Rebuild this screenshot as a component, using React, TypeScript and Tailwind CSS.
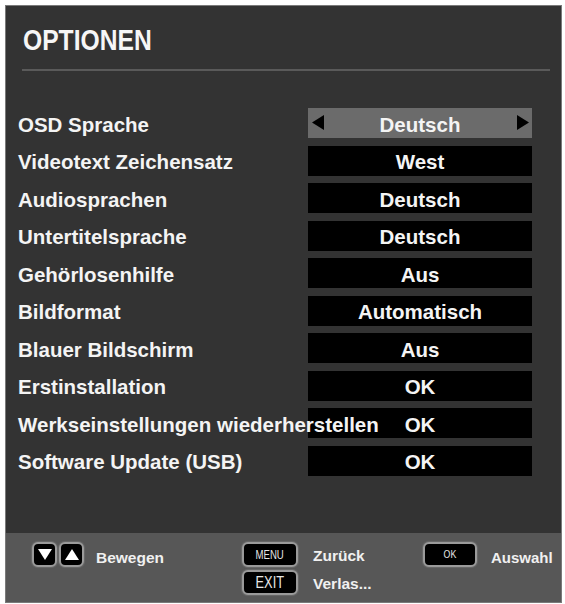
import React from "react";

type Row = { label: string; value: string };

const rows: Row[] = [
  { label: "OSD Sprache", value: "Deutsch" },
  { label: "Videotext Zeichensatz", value: "West" },
  { label: "Audiosprachen", value: "Deutsch" },
  { label: "Untertitelsprache", value: "Deutsch" },
  { label: "Gehörlosenhilfe", value: "Aus" },
  { label: "Bildformat", value: "Automatisch" },
  { label: "Blauer Bildschirm", value: "Aus" },
  { label: "Erstinstallation", value: "OK" },
  { label: "Werkseinstellungen wiederherstellen", value: "OK" },
  { label: "Software Update (USB)", value: "OK" },
];

function Triangle({ dir, className }: { dir: "left" | "right" | "up" | "down"; className?: string }) {
  const points = {
    left: "10,0 10,13 0,6.5",
    right: "0,0 0,13 10,6.5",
    up: "6.5,0 13,11 0,11",
    down: "0,0 13,0 6.5,11",
  }[dir];
  const box = dir === "left" || dir === "right" ? "0 0 10 13" : "0 0 13 11";
  return (
    <svg viewBox={box} preserveAspectRatio="none" className={className}>
      <polygon points={points} fill="currentColor" />
    </svg>
  );
}

function OptionRow({ row, selected }: { row: Row; selected: boolean }) {
  return (
    <div className="flex h-[30px] items-center">
      <span className="relative z-10 w-[290px] whitespace-nowrap pt-[4px] text-[20.5px] font-bold leading-none text-[#f4f4f4]">
        {row.label}
      </span>
      <div
        className={
          selected
            ? "relative flex h-[30px] w-[224px] items-center justify-center bg-[#6b6b6b]"
            : "flex h-[30px] w-[224px] items-center justify-center bg-black"
        }
      >
        {selected && (
          <Triangle dir="left" className="absolute left-[4px] top-[7px] h-[15px] w-[12px] text-black" />
        )}
        <span className="pt-[4px] text-[20.5px] font-bold leading-none text-[#f4f4f4]">{row.value}</span>
        {selected && (
          <Triangle dir="right" className="absolute right-[3px] top-[7px] h-[15px] w-[12px] text-black" />
        )}
      </div>
    </div>
  );
}

function KeyCap({ children, className }: { children: React.ReactNode; className: string }) {
  return (
    <div
      className={`flex items-center justify-center rounded-[6px] border-2 border-[#9a9a9a] bg-black text-[#e6e6e6] shadow-[0_0_1px_1px_#6a6a6a] ${className}`}
    >
      {children}
    </div>
  );
}

export default function App() {
  return (
    <div className="h-[604px] w-[565px] bg-white pl-[5px] pt-[5px] font-['Liberation_Sans',Arial,sans-serif]">
      <div className="flex h-[598px] w-[557px] flex-col border border-[#7a7a7a] bg-[#333333]">
        <div className="flex-1">
          <h1 className="origin-left scale-x-[0.85] pl-[20px] pt-[20px] text-[29px] font-bold leading-none text-[#f6f6f6]">
            OPTIONEN
          </h1>
          <div className="ml-[16px] mt-[14px] h-[2px] w-[528px] bg-[#5a5a5a]" />
          <div className="mt-[37px] flex flex-col gap-[7.5px] pl-[12px]">
            {rows.map((row, i) => (
              <OptionRow key={row.label} row={row} selected={i === 0} />
            ))}
          </div>
        </div>
        <div className="flex h-[69px] bg-[#575757] pl-[26px] pt-[9px]">
          <div className="flex w-[210px] items-start">
            <KeyCap className="h-[25px] w-[25px]">
              <Triangle dir="down" className="h-[11px] w-[14px] text-white" />
            </KeyCap>
            <KeyCap className="ml-[2px] h-[25px] w-[25px]">
              <Triangle dir="up" className="h-[11px] w-[14px] text-white" />
            </KeyCap>
            <span className="ml-[12px] mt-[8px] text-[15.5px] font-bold leading-none text-[#f0f0f0]">Bewegen</span>
          </div>
          <div className="flex w-[181px] flex-col gap-[3px]">
            <div className="flex items-center">
              <KeyCap className="h-[25px] w-[56px]">
                <span className="scale-x-[0.8] text-[12px] leading-none">MENU</span>
              </KeyCap>
              <span className="ml-[15px] pt-[2px] text-[15.5px] font-bold leading-none text-[#f0f0f0]">Zurück</span>
            </div>
            <div className="flex items-center">
              <KeyCap className="h-[25px] w-[56px]">
                <span className="scale-x-[0.8] text-[16px] leading-none">EXIT</span>
              </KeyCap>
              <span className="ml-[15px] pt-[2px] text-[15.5px] font-bold leading-none text-[#f0f0f0]">Verlas...</span>
            </div>
          </div>
          <div className="flex items-start">
            <KeyCap className="h-[25px] w-[54px]">
              <span className="scale-x-[0.8] text-[11px] leading-none">OK</span>
            </KeyCap>
            <span className="ml-[14px] mt-[8px] text-[15px] font-bold leading-none text-[#f0f0f0]">Auswahl</span>
          </div>
        </div>
      </div>
    </div>
  );
}
